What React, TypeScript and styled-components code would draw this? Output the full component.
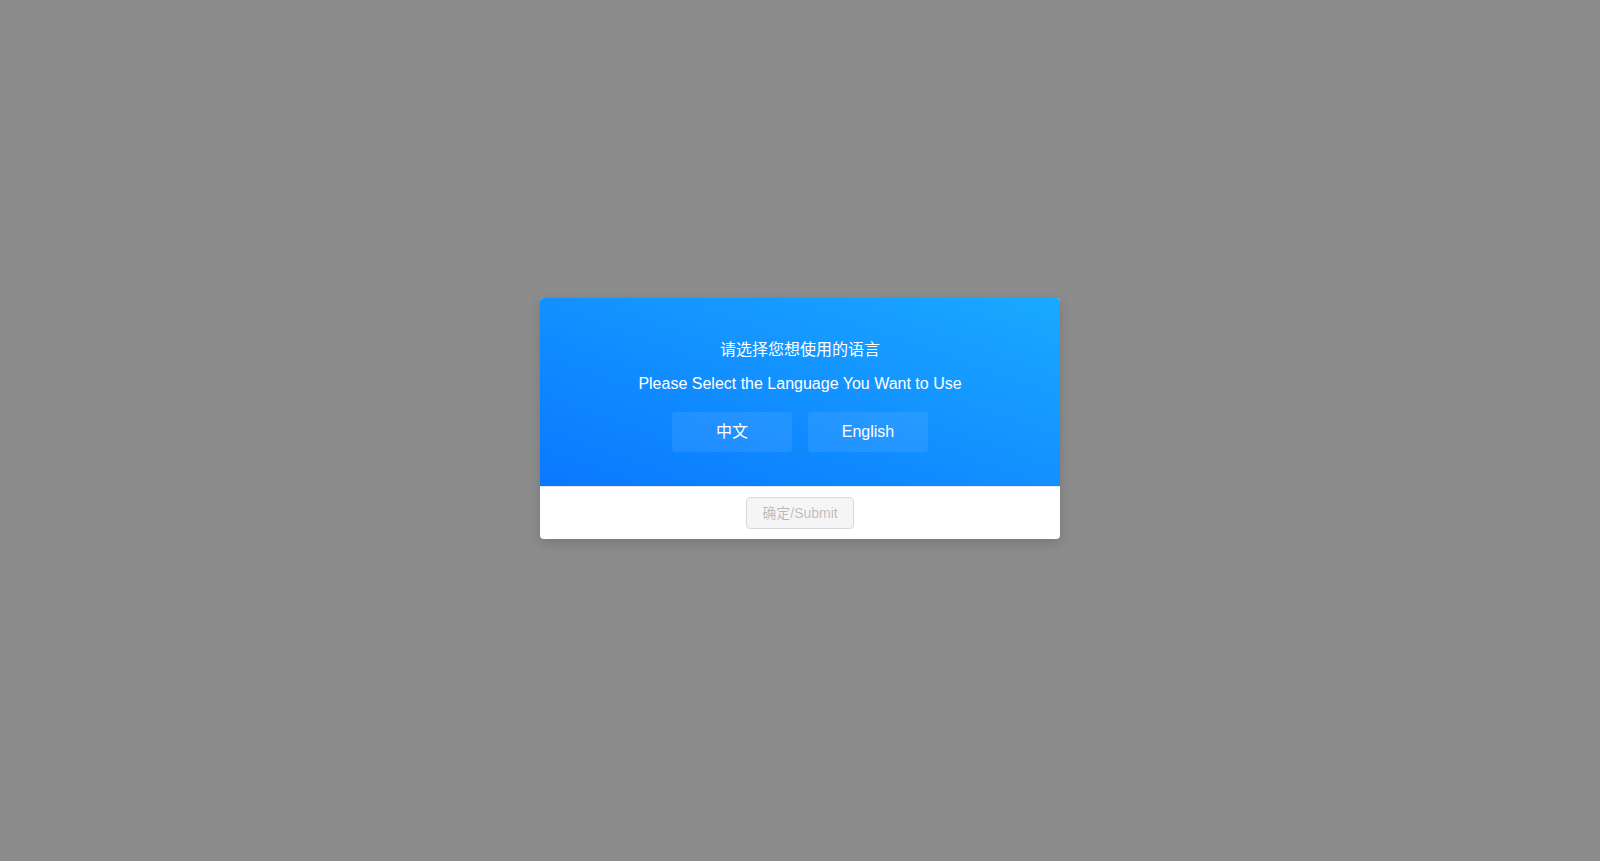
import { FC, useState } from "react";
import styled, { createGlobalStyle } from "styled-components";

const GlobalStyle = createGlobalStyle`
	html, body {
		margin: 0;
		padding: 0;
	}
	body {
		background: #8c8c8c;
		font-family: "Liberation Sans", "Noto Sans CJK SC", Arial, sans-serif;
	}
`;

const languages = [
	{ key: "zh", label: "中文" },
	{ key: "en", label: "English" },
];

const App: FC = () => {
	const [lang, setLang] = useState<string | null>(null);

	return (
		<>
			<GlobalStyle />
			<Mask>
				<Dialog>
					<Header>
						<Title>请选择您想使用的语言</Title>
						<SubTitle>Please Select the Language You Want to Use</SubTitle>
						<Choices>
							{languages.map((l) => (
								<LangButton key={l.key} $active={lang === l.key} onClick={() => setLang(l.key)}>
									{l.label}
								</LangButton>
							))}
						</Choices>
					</Header>
					<Footer>
						<SubmitButton disabled={!lang}>确定/Submit</SubmitButton>
					</Footer>
				</Dialog>
			</Mask>
		</>
	);
};

export default App;

const Mask = styled.div`
	min-height: 100vh;
	box-sizing: border-box;
	padding-bottom: 24px;
	display: flex;
	align-items: center;
	justify-content: center;
`;

const Dialog = styled.div`
	width: 520px;
	background: #fff;
	border-radius: 4px;
	overflow: hidden;
	box-shadow: 0 4px 12px rgba(0, 0, 0, 0.15);
`;

const Header = styled.div`
	height: 188px;
	box-sizing: border-box;
	padding-top: 40px;
	display: flex;
	flex-direction: column;
	align-items: center;
	color: #fff;
	background: linear-gradient(to top right, #0a78ff 0%, #1aa9ff 100%);
`;

const Title = styled.div`
	font-size: 16px;
	line-height: 24px;
	margin-bottom: 10px;
`;

const SubTitle = styled.div`
	font-size: 16px;
	line-height: 24px;
	margin-bottom: 16px;
`;

const Choices = styled.div`
	display: flex;
	gap: 16px;
`;

const LangButton = styled.button<{ $active: boolean }>`
	width: 120px;
	height: 40px;
	padding: 0;
	display: flex;
	align-items: center;
	justify-content: center;
	border: none;
	border-radius: 4px;
	font-family: inherit;
	font-size: 16px;
	line-height: 1;
	color: #fff;
	cursor: pointer;
	background: ${(p) => (p.$active ? "rgba(255, 255, 255, 0.3)" : "rgba(255, 255, 255, 0.08)")};
`;

const Footer = styled.div`
	border-top: 1px solid #e8e8e8;
	padding: 10px 16px;
	display: flex;
	justify-content: center;
`;

const SubmitButton = styled.button`
	height: 32px;
	padding: 0 15px 2px;
	font-family: inherit;
	font-size: 14px;
	border-radius: 4px;
	border: 1px solid #1890ff;
	background: #1890ff;
	color: #fff;
	cursor: pointer;
	&:disabled {
		color: rgba(0, 0, 0, 0.25);
		background: #f5f5f5;
		border-color: #d9d9d9;
		cursor: not-allowed;
	}
`;
